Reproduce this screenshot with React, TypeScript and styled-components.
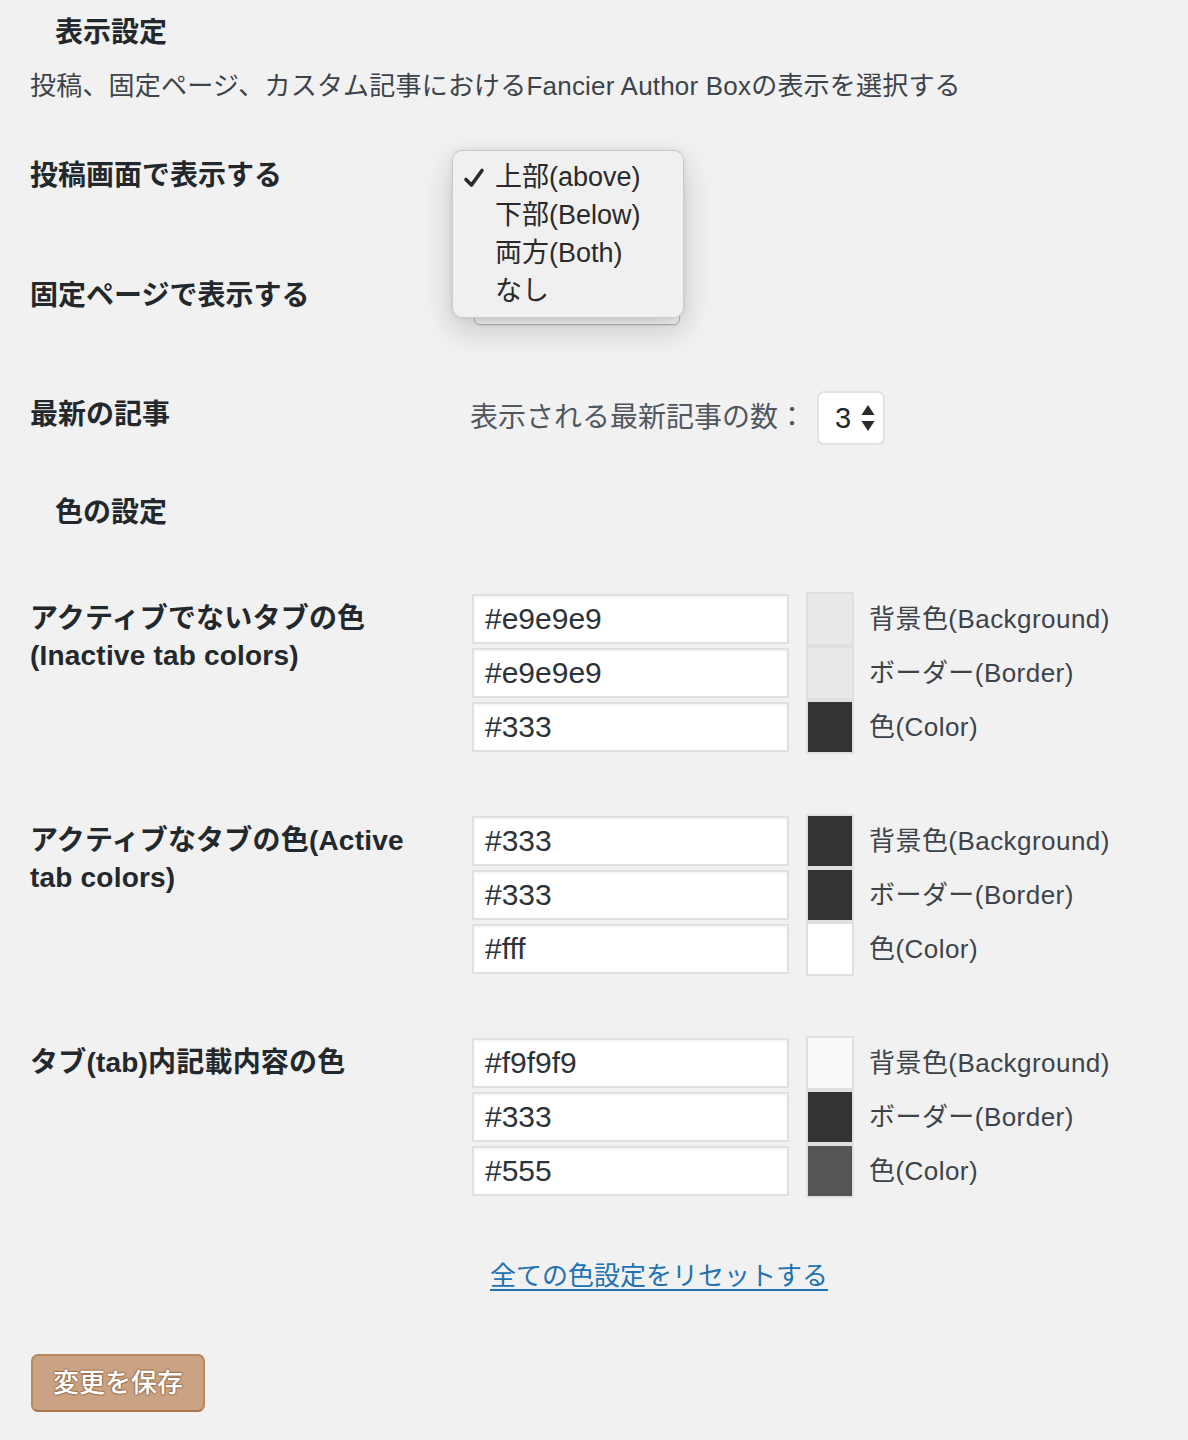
import React from "react";
import styled, { createGlobalStyle } from "styled-components";

const GlobalStyle = createGlobalStyle`
  html, body {
    margin: 0;
    padding: 0;
    background: #f1f1f1;
  }
  body {
    font-family: "Liberation Sans", "Noto Sans CJK JP", sans-serif;
    color: #23282d;
  }
  * { box-sizing: border-box; }
`;

const Page = styled.div`
  width: 1188px;
  min-height: 1440px;
  padding: 13px 0 0 30px;
  background: #f1f1f1;
`;

const SectionTitle = styled.h2<{ $top?: number }>`
  margin: ${(p) => p.$top ?? 0}px 0 0 25px;
  font-size: 28px;
  line-height: 40px;
  font-weight: 700;
  color: #23282d;
`;

const Description = styled.p`
  margin: 14px 0 0;
  font-size: 26px;
  line-height: 38px;
  letter-spacing: 0.2px;
  color: #3c434a;
`;

const Table = styled.div<{ $top: number }>`
  margin-top: ${(p) => p.$top}px;
  display: flex;
  flex-direction: column;
`;

const Row = styled.div<{ $height: number }>`
  display: grid;
  grid-template-columns: 440px 1fr;
  height: ${(p) => p.$height}px;
`;

const Label = styled.div<{ $padTop: number }>`
  padding-top: ${(p) => p.$padTop}px;
  font-size: 28px;
  line-height: 40px;
  font-weight: 700;
  color: #23282d;
  max-width: 400px;
`;

const Cell = styled.div<{ $padTop?: number }>`
  position: relative;
  padding-top: ${(p) => p.$padTop ?? 0}px;
`;

const Select = styled.div<{ $top: number }>`
  margin: ${(p) => p.$top}px 0 0 4px;
  width: 206px;
  height: 46px;
  border: 1px solid #b9b9b9;
  border-radius: 6px;
  background: #f7f7f7;
  box-shadow: 0 1px 1px rgba(0, 0, 0, 0.08);
`;

const Popup = styled.ul`
  position: absolute;
  left: -18px;
  top: 14px;
  z-index: 5;
  width: 232px;
  height: 168px;
  margin: 0;
  padding: 7px 0 9px;
  list-style: none;
  background: rgba(240, 240, 240, 0.98);
  border: 1px solid rgba(0, 0, 0, 0.16);
  border-radius: 10px;
  box-shadow: 0 12px 30px rgba(0, 0, 0, 0.18), 0 0 6px rgba(0, 0, 0, 0.08);
`;

const PopupItem = styled.li`
  position: relative;
  height: 38px;
  padding-left: 42px;
  font-size: 27px;
  line-height: 38px;
  color: #2a2a2a;
  white-space: nowrap;
`;

const Check = styled.svg`
  position: absolute;
  left: 10px;
  top: 9px;
`;

const Inline = styled.div`
  display: flex;
  align-items: center;
  gap: 11px;
`;

const Hint = styled.span`
  font-size: 28px;
  line-height: 40px;
  color: #50575e;
`;

const NumberBox = styled.div`
  display: flex;
  align-items: center;
  justify-content: space-between;
  width: 68px;
  height: 54px;
  padding: 0 8px 0 16px;
  background: #fff;
  border: 2px solid #e2e2e2;
  border-radius: 7px;
  font-size: 29px;
  color: #23282d;
`;

const ColorGroup = styled.div`
  display: grid;
  grid-template-columns: 442px 1fr;
  padding: 30px 0;
`;

const GroupLabel = styled.div`
  padding-top: 8px;
  max-width: 400px;
  font-size: 28px;
  line-height: 37px;
  font-weight: 700;
  letter-spacing: 0.2px;
  color: #23282d;
`;

const Lines = styled.div`
  display: flex;
  flex-direction: column;
`;

const ColorLine = styled.div`
  display: flex;
  align-items: center;
  height: 54px;
`;

const HexInput = styled.div`
  width: 317px;
  height: 50px;
  padding-left: 11px;
  background: #fff;
  border: 2px solid #e0e0e0;
  box-shadow: inset 0 2px 2px rgba(0, 0, 0, 0.04);
  font-size: 30px;
  line-height: 46px;
  color: #2c3338;
`;

const Swatch = styled.div<{ $color: string }>`
  width: 48px;
  height: 54px;
  margin-left: 17px;
  border: 2px solid #e0e0e0;
  background: ${(p) => p.$color};
`;

const SwatchLabel = styled.span`
  margin-left: 15px;
  font-size: 26px;
  line-height: 38px;
  letter-spacing: 0.45px;
  color: #3c434a;
  white-space: nowrap;
`;

const LinkRow = styled.div`
  margin: 29px 0 0 460px;
`;

const ResetLink = styled.a`
  font-size: 26px;
  line-height: 38px;
  color: #2271b1;
  text-decoration: underline;
  text-decoration-thickness: 2px;
  text-underline-offset: 4px;
  cursor: pointer;
`;

const SaveButton = styled.button`
  display: block;
  margin: 59px 0 0 1px;
  height: 58px;
  padding: 0 20px;
  background: #c9a384;
  border: 2px solid #b8885f;
  border-bottom-color: #a8754c;
  border-radius: 7px;
  font-family: inherit;
  font-size: 26px;
  font-weight: 500;
  line-height: 52px;
  color: #fff;
  text-shadow: 0 -1px 1px #9d6f4b, 1px 0 1px #9d6f4b, 0 1px 1px #9d6f4b, -1px 0 1px #9d6f4b;
`;

type ColorEntry = { value: string; label: string };
type Group = { title: string; colors: ColorEntry[] };

const groups: Group[] = [
  {
    title: "アクティブでないタブの色(Inactive tab colors)",
    colors: [
      { value: "#e9e9e9", label: "背景色(Background)" },
      { value: "#e9e9e9", label: "ボーダー(Border)" },
      { value: "#333", label: "色(Color)" },
    ],
  },
  {
    title: "アクティブなタブの色(Active tab colors)",
    colors: [
      { value: "#333", label: "背景色(Background)" },
      { value: "#333", label: "ボーダー(Border)" },
      { value: "#fff", label: "色(Color)" },
    ],
  },
  {
    title: "タブ(tab)内記載内容の色",
    colors: [
      { value: "#f9f9f9", label: "背景色(Background)" },
      { value: "#333", label: "ボーダー(Border)" },
      { value: "#555", label: "色(Color)" },
    ],
  },
];

const options = ["上部(above)", "下部(Below)", "両方(Both)", "なし"];

export default function App() {
  return (
    <>
      <GlobalStyle />
      <Page>
        <SectionTitle>表示設定</SectionTitle>
        <Description>
          投稿、固定ページ、カスタム記事におけるFancier Author Boxの表示を選択する
        </Description>

        <Table $top={31}>
          <Row $height={120}>
            <Label $padTop={20}>投稿画面で表示する</Label>
            <Cell>
              <Select $top={20} />
              <Popup>
                {options.map((o, i) => (
                  <PopupItem key={o}>
                    {i === 0 && (
                      <Check width="22" height="22" viewBox="0 0 22 22">
                        <path
                          d="M3 12.5 L8.5 18 L19 3.5"
                          fill="none"
                          stroke="#2b2b2b"
                          strokeWidth="3.6"
                          strokeLinecap="round"
                          strokeLinejoin="round"
                        />
                      </Check>
                    )}
                    {o}
                  </PopupItem>
                ))}
              </Popup>
            </Cell>
          </Row>
          <Row $height={120}>
            <Label $padTop={20}>固定ページで表示する</Label>
            <Cell>
              <Select $top={23} />
            </Cell>
          </Row>
          <Row $height={117}>
            <Label $padTop={19}>最新の記事</Label>
            <Cell $padTop={15}>
              <Inline>
                <Hint>表示される最新記事の数：</Hint>
                <NumberBox>
                  <span>3</span>
                  <svg width="14" height="28" viewBox="0 0 14 28">
                    <path d="M7 1 L13.5 11 L0.5 11 Z" fill="#2b2b2b" />
                    <path d="M0.5 17 L13.5 17 L7 27 Z" fill="#2b2b2b" />
                  </svg>
                </NumberBox>
              </Inline>
            </Cell>
          </Row>
        </Table>

        <SectionTitle>色の設定</SectionTitle>

        <Table $top={29}>
          {groups.map((g) => (
            <ColorGroup key={g.title}>
              <GroupLabel>{g.title}</GroupLabel>
              <Lines>
                {g.colors.map((c, i) => (
                  <ColorLine key={i}>
                    <HexInput>{c.value}</HexInput>
                    <Swatch $color={c.value} />
                    <SwatchLabel>{c.label}</SwatchLabel>
                  </ColorLine>
                ))}
              </Lines>
            </ColorGroup>
          ))}
        </Table>

        <LinkRow>
          <ResetLink>全ての色設定をリセットする</ResetLink>
        </LinkRow>

        <SaveButton>変更を保存</SaveButton>
      </Page>
    </>
  );
}
